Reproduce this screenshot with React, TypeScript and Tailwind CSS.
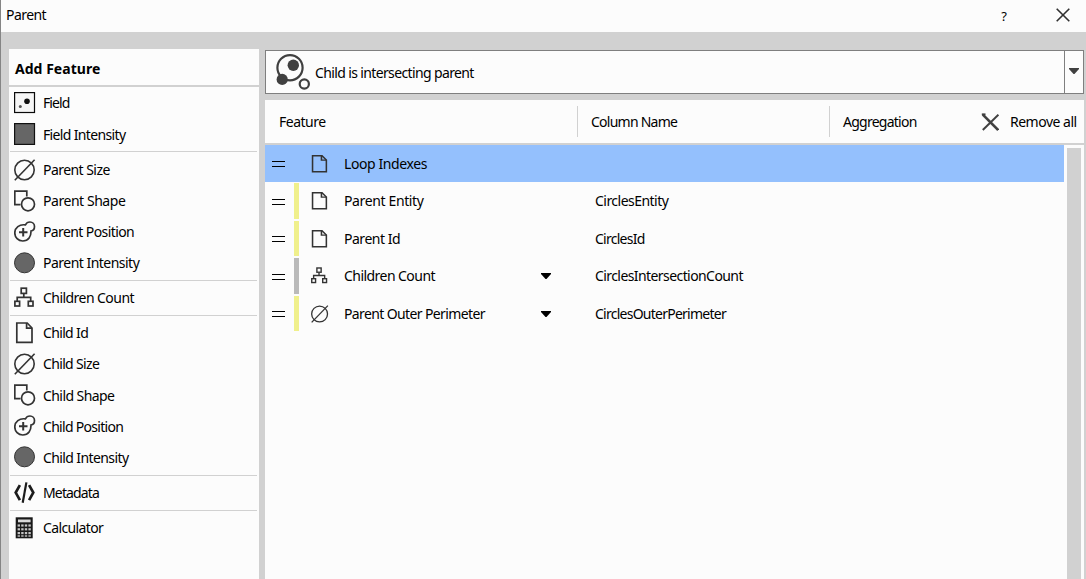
import React from "react";

type IconProps = { className?: string };

const FieldIcon = ({ className = "" }: IconProps) => (
  <svg viewBox="0 0 22 22" className={className}>
    <rect x="0.6" y="0.6" width="19.9" height="19.9" fill="#f6f6f6" stroke="#0a0a0a" strokeWidth="1.2" />
    <circle cx="13" cy="9.2" r="2.8" fill="#111" />
    <circle cx="6.3" cy="14.6" r="1.5" fill="#555" />
  </svg>
);

const SquareIcon = ({ className = "" }: IconProps) => (
  <svg viewBox="0 0 22 22" className={className}>
    <rect x="0.6" y="0.6" width="19.9" height="20.8" fill="#666" stroke="#111" strokeWidth="1.2" />
  </svg>
);

const SizeIcon = ({ className = "" }: IconProps) => (
  <svg viewBox="0 0 22 22" className={className} fill="none" stroke="#333" strokeWidth="1.6">
    <circle cx="10.5" cy="11" r="9.7" />
    <path d="M0.8 21.2 20.6 0.8" />
  </svg>
);

const ShapeIcon = ({ className = "" }: IconProps) => (
  <svg viewBox="0 0 22 22" className={className} fill="none" stroke="#333" strokeWidth="1.7">
    <path d="M6.5 14.7H0.8V1.2H12.8V6.5" />
    <circle cx="14" cy="14.3" r="6.5" />
  </svg>
);

const PositionIcon = ({ className = "" }: IconProps) => (
  <svg viewBox="0 0 22 22" className={className} fill="none" stroke="#333" strokeWidth="1.7">
    <path d="M11.4 3.9C12.3 2 14 1 16 1C18.6 1 20.5 3 20.5 5.4C20.5 8 19 9.7 17 10C17.2 15.6 14.5 20 8.8 20C4.2 20 0.8 16.5 0.8 11.9C0.8 6.7 5.4 3 11.4 3.9Z" />
    <path d="M9.2 7V15.5M5 11.2H13.5" strokeWidth="2" />
  </svg>
);

const DiscIcon = ({ className = "" }: IconProps) => (
  <svg viewBox="0 0 22 22" className={className}>
    <circle cx="10.5" cy="10.8" r="10" fill="#666" stroke="#333" />
  </svg>
);

const TreeIcon = ({ className = "" }: IconProps) => (
  <svg viewBox="0 0 22 22" className={className} fill="none" stroke="#333" strokeWidth="1.7">
    <rect x="7.2" y="1.2" width="5.2" height="5.2" />
    <rect x="0.9" y="14.3" width="4.7" height="4.7" />
    <rect x="14.3" y="14.3" width="4.7" height="4.7" />
    <path d="M9.8 6.8V10.4M3.2 14.2V10.4H16.7V14.2" />
  </svg>
);

const PageIcon = ({ className = "" }: IconProps) => (
  <svg viewBox="0 0 22 22" preserveAspectRatio="none" className={className} fill="none" stroke="#333" strokeWidth="1.7">
    <path d="M2.8 1H13.2L18 6V20.4H2.8Z" />
    <path d="M12.6 1V6.2H18" />
  </svg>
);

const CodeIcon = ({ className = "" }: IconProps) => (
  <svg viewBox="0 0 22 22" className={className} fill="none" stroke="#1c1c1c" strokeWidth="2.7">
    <path d="M5.9 3.2 1.7 10.6 5.9 18.2M15.1 3.2 19.3 10.6 15.1 18.2" />
    <path d="M12.4 0.4 8.7 20.8" strokeWidth="2.2" />
  </svg>
);

const CalculatorIcon = ({ className = "" }: IconProps) => (
  <svg viewBox="0 0 22 22" className={className}>
    <rect x="1.7" y="0.3" width="17" height="21" fill="#191919" />
    <rect x="4" y="2.5" width="12.6" height="2.8" fill="#d8d8d8" />
    {[7.4, 11.2, 15].map((y) =>
      [3.6, 7.2, 10.8, 14.4].map((x) => (
        <rect key={`${x}-${y}`} x={x} y={y} width="2.4" height="2.2" fill="#c4c4c4" />
      )),
    )}
    {[3.6, 7.2, 10.8, 14.4].map((x) => (
      <rect key={x} x={x} y="18.3" width="2.4" height="1.4" fill="#c4c4c4" />
    ))}
  </svg>
);

const RelationIcon = ({ className = "" }: IconProps) => (
  <svg viewBox="0 0 34 36" className={className} fill="none" stroke="#404040">
    <circle cx="14" cy="13.7" r="12.6" strokeWidth="2.2" />
    <circle cx="17.3" cy="11.2" r="5.7" fill="#404040" stroke="none" />
    <circle cx="6.2" cy="25.4" r="5.6" fill="#404040" stroke="none" />
    <circle cx="28.3" cy="30" r="4.6" strokeWidth="2.2" />
  </svg>
);

const Caret = ({ className = "" }: IconProps) => (
  <svg viewBox="0 0 10 6" className={className} fill="currentColor">
    <path d="M0 0H10V1L5.5 6H4.5L0 1Z" />
  </svg>
);

type Icon = (props: IconProps) => React.ReactElement;
type Item = { label: string; icon: Icon; track: string };

const groups: { pad: string; items: Item[] }[] = [
  {
    pad: "h-[65px] pb-px",
    items: [
      { label: "Field", icon: FieldIcon, track: "tracking-[-0.9px]" },
      { label: "Field Intensity", icon: SquareIcon, track: "tracking-[-0.65px]" },
    ],
  },
  {
    pad: "h-[129px] py-[2px]",
    items: [
      { label: "Parent Size", icon: SizeIcon, track: "tracking-[-0.55px]" },
      { label: "Parent Shape", icon: ShapeIcon, track: "tracking-[-0.45px]" },
      { label: "Parent Position", icon: PositionIcon, track: "tracking-[-0.6px]" },
      { label: "Parent Intensity", icon: DiscIcon, track: "tracking-[-0.52px]" },
    ],
  },
  {
    pad: "h-[35px] pt-px pb-[2px]",
    items: [{ label: "Children Count", icon: TreeIcon, track: "tracking-[-0.55px]" }],
  },
  {
    pad: "h-[160px] pt-px pb-[2px]",
    items: [
      { label: "Child Id", icon: PageIcon, track: "tracking-[-0.65px]" },
      { label: "Child Size", icon: SizeIcon, track: "tracking-[-0.65px]" },
      { label: "Child Shape", icon: ShapeIcon, track: "tracking-[-0.57px]" },
      { label: "Child Position", icon: PositionIcon, track: "tracking-[-0.7px]" },
      { label: "Child Intensity", icon: DiscIcon, track: "tracking-[-0.6px]" },
    ],
  },
  {
    pad: "h-[35px] pt-px pb-[2px]",
    items: [{ label: "Metadata", icon: CodeIcon, track: "tracking-[-0.85px]" }],
  },
  {
    pad: "h-[35px] pt-px pb-[2px] border-transparent",
    items: [{ label: "Calculator", icon: CalculatorIcon, track: "tracking-[-0.63px]" }],
  },
];

type Row = {
  name: string;
  nameTrack: string;
  column?: string;
  columnTrack?: string;
  icon: Icon;
  iconSize: string;
  height: string;
  bar: string;
  menu?: boolean;
};

const pageSize = "ml-[11px] mr-[-1px] w-[20px]";
const glyphSize = "ml-[12px] w-[18px]";

const rows: Row[] = [
  { name: "Loop Indexes", nameTrack: "tracking-[-0.4px]", icon: PageIcon, iconSize: pageSize, height: "h-[37px] bg-[#94c0fd]", bar: "" },
  { name: "Parent Entity", nameTrack: "tracking-[-0.37px]", column: "CirclesEntity", columnTrack: "tracking-[-0.53px]", icon: PageIcon, iconSize: pageSize, height: "h-[38px]", bar: "bg-[#f0f08c]" },
  { name: "Parent Id", nameTrack: "tracking-[-0.48px]", column: "CirclesId", columnTrack: "tracking-[-0.75px]", icon: PageIcon, iconSize: pageSize, height: "h-[37px]", bar: "bg-[#f0f08c]" },
  { name: "Children Count", nameTrack: "tracking-[-0.55px]", column: "CirclesIntersectionCount", columnTrack: "tracking-[-0.58px]", icon: TreeIcon, iconSize: glyphSize, height: "h-[38px]", bar: "bg-[#bababa]", menu: true },
  { name: "Parent Outer Perimeter", nameTrack: "tracking-[-0.62px]", column: "CirclesOuterPerimeter", columnTrack: "tracking-[-0.75px]", icon: SizeIcon, iconSize: glyphSize, height: "h-[37px]", bar: "bg-[#f0f08c]", menu: true },
];

function Sidebar() {
  return (
    <aside className="flex w-[250px] shrink-0 flex-col bg-[#fcfcfc]">
      <h2 className="flex h-[38px] items-center border-b-2 border-[#d1d1d1] pl-[6px] pt-[3px] text-[14px] font-bold tracking-[0.03px]">
        Add Feature
      </h2>
      <div className="flex flex-col pl-px pr-[2px]">
        {groups.map((group, i) => (
          <ul key={i} className={`flex flex-col border-b border-[#d1d1d1] ${group.pad}`}>
            {group.items.map(({ label, icon: Glyph, track }) => (
              <li key={label} className="flex min-h-0 flex-1 items-center pl-[4px]">
                <Glyph className="h-[22px] w-[22px] shrink-0" />
                <span className={`ml-[7px] pt-px ${track}`}>{label}</span>
              </li>
            ))}
          </ul>
        ))}
      </div>
    </aside>
  );
}

function FeatureTable() {
  return (
    <section className="mt-[6px] flex flex-1 flex-col bg-[#fcfcfc]">
      <div className="flex h-[45px] shrink-0 items-center border-b-2 border-[#d1d1d1]">
        <div className="w-[312px] pl-[14px] tracking-[-0.5px]">Feature</div>
        <div className="flex h-[31px] w-[252px] items-center border-l border-[#d1d1d1] pl-[13px] tracking-[-0.75px]">Column Name</div>
        <div className="flex h-[31px] w-[152px] items-center border-l border-[#d1d1d1] pl-[13px] tracking-[-0.75px]">Aggregation</div>
        <button className="flex items-center tracking-[-0.5px]">
          <svg viewBox="0 0 18 18" className="h-[18px] w-[18px]" fill="none" stroke="#404040">
            <path d="M1.8 1.6 17.2 17" strokeWidth="2.6" />
            <path d="M17.4 1.6 1.8 17" strokeWidth="2" />
            <path d="M0.8 1.3H4.5" strokeWidth="1.8" />
          </svg>
          <span className="ml-[11px] whitespace-nowrap">Remove all</span>
        </button>
      </div>
      <div className="flex flex-1">
        <div className="flex w-[799px] flex-col">
          {rows.map(({ name, nameTrack, column, columnTrack, icon: Glyph, iconSize, height, bar, menu }) => (
            <div key={name} className={`flex items-center ${height}`}>
              <div className="ml-[7px] mt-px h-[6px] w-[13px] border-y border-black" />
              <div className={`ml-[9px] h-full w-[5px] bg-clip-content py-px ${bar}`} />
              <Glyph className={`h-[18px] shrink-0 ${iconSize}`} />
              <span className={`ml-[15px] w-[197px] ${nameTrack}`}>{name}</span>
              <Caret className={menu ? "h-[6px] w-[10px]" : "invisible h-[6px] w-[10px]"} />
              <span className={`ml-[44px] ${columnTrack ?? ""}`}>{column}</span>
            </div>
          ))}
        </div>
        <div className="mt-[3px] ml-[3px] w-[14px] bg-[#d1d1d1]" />
      </div>
    </section>
  );
}

export default function App() {
  return (
    <div className="flex h-[579px] w-[1086px] flex-col overflow-hidden border-l border-[#858585] bg-[#d1d1d1] font-['Noto_Sans',sans-serif] text-[14px] leading-[20px] text-black">
      <header className="flex h-[32px] shrink-0 items-center bg-[#fcfcfc] pl-[5px]">
        <h1 className="mb-[3px] flex-1 tracking-[-0.55px]">Parent</h1>
        <span className="mr-[49px] text-[13px]">?</span>
        <svg viewBox="0 0 14 14" className="mr-[16px] mb-[2px] h-[14px] w-[14px]" stroke="#303030" strokeWidth="1.6">
          <path d="M0.7 0.7 13.3 13.3M13.3 0.7 0.7 13.3" />
        </svg>
      </header>
      <div className="flex min-h-0 flex-1 pl-[8px] pt-[17px]">
        <Sidebar />
        <main className="ml-[6px] mt-px flex w-[819px] flex-col">
          <div className="flex h-[44px] shrink-0 border border-[#7f7f7f] bg-[#fcfcfc]">
            <div className="flex flex-1 items-center pl-[10px]">
              <RelationIcon className="mb-px h-[36px] w-[34px]" />
              <span className="ml-[5px] pt-[2px] tracking-[-0.63px]">Child is intersecting parent</span>
            </div>
            <div className="flex w-[19px] items-center justify-center border-l border-[#7f7f7f] text-[#404040]">
              <Caret className="mb-[2px] h-[6px] w-[10px]" />
            </div>
          </div>
          <FeatureTable />
        </main>
      </div>
    </div>
  );
}
